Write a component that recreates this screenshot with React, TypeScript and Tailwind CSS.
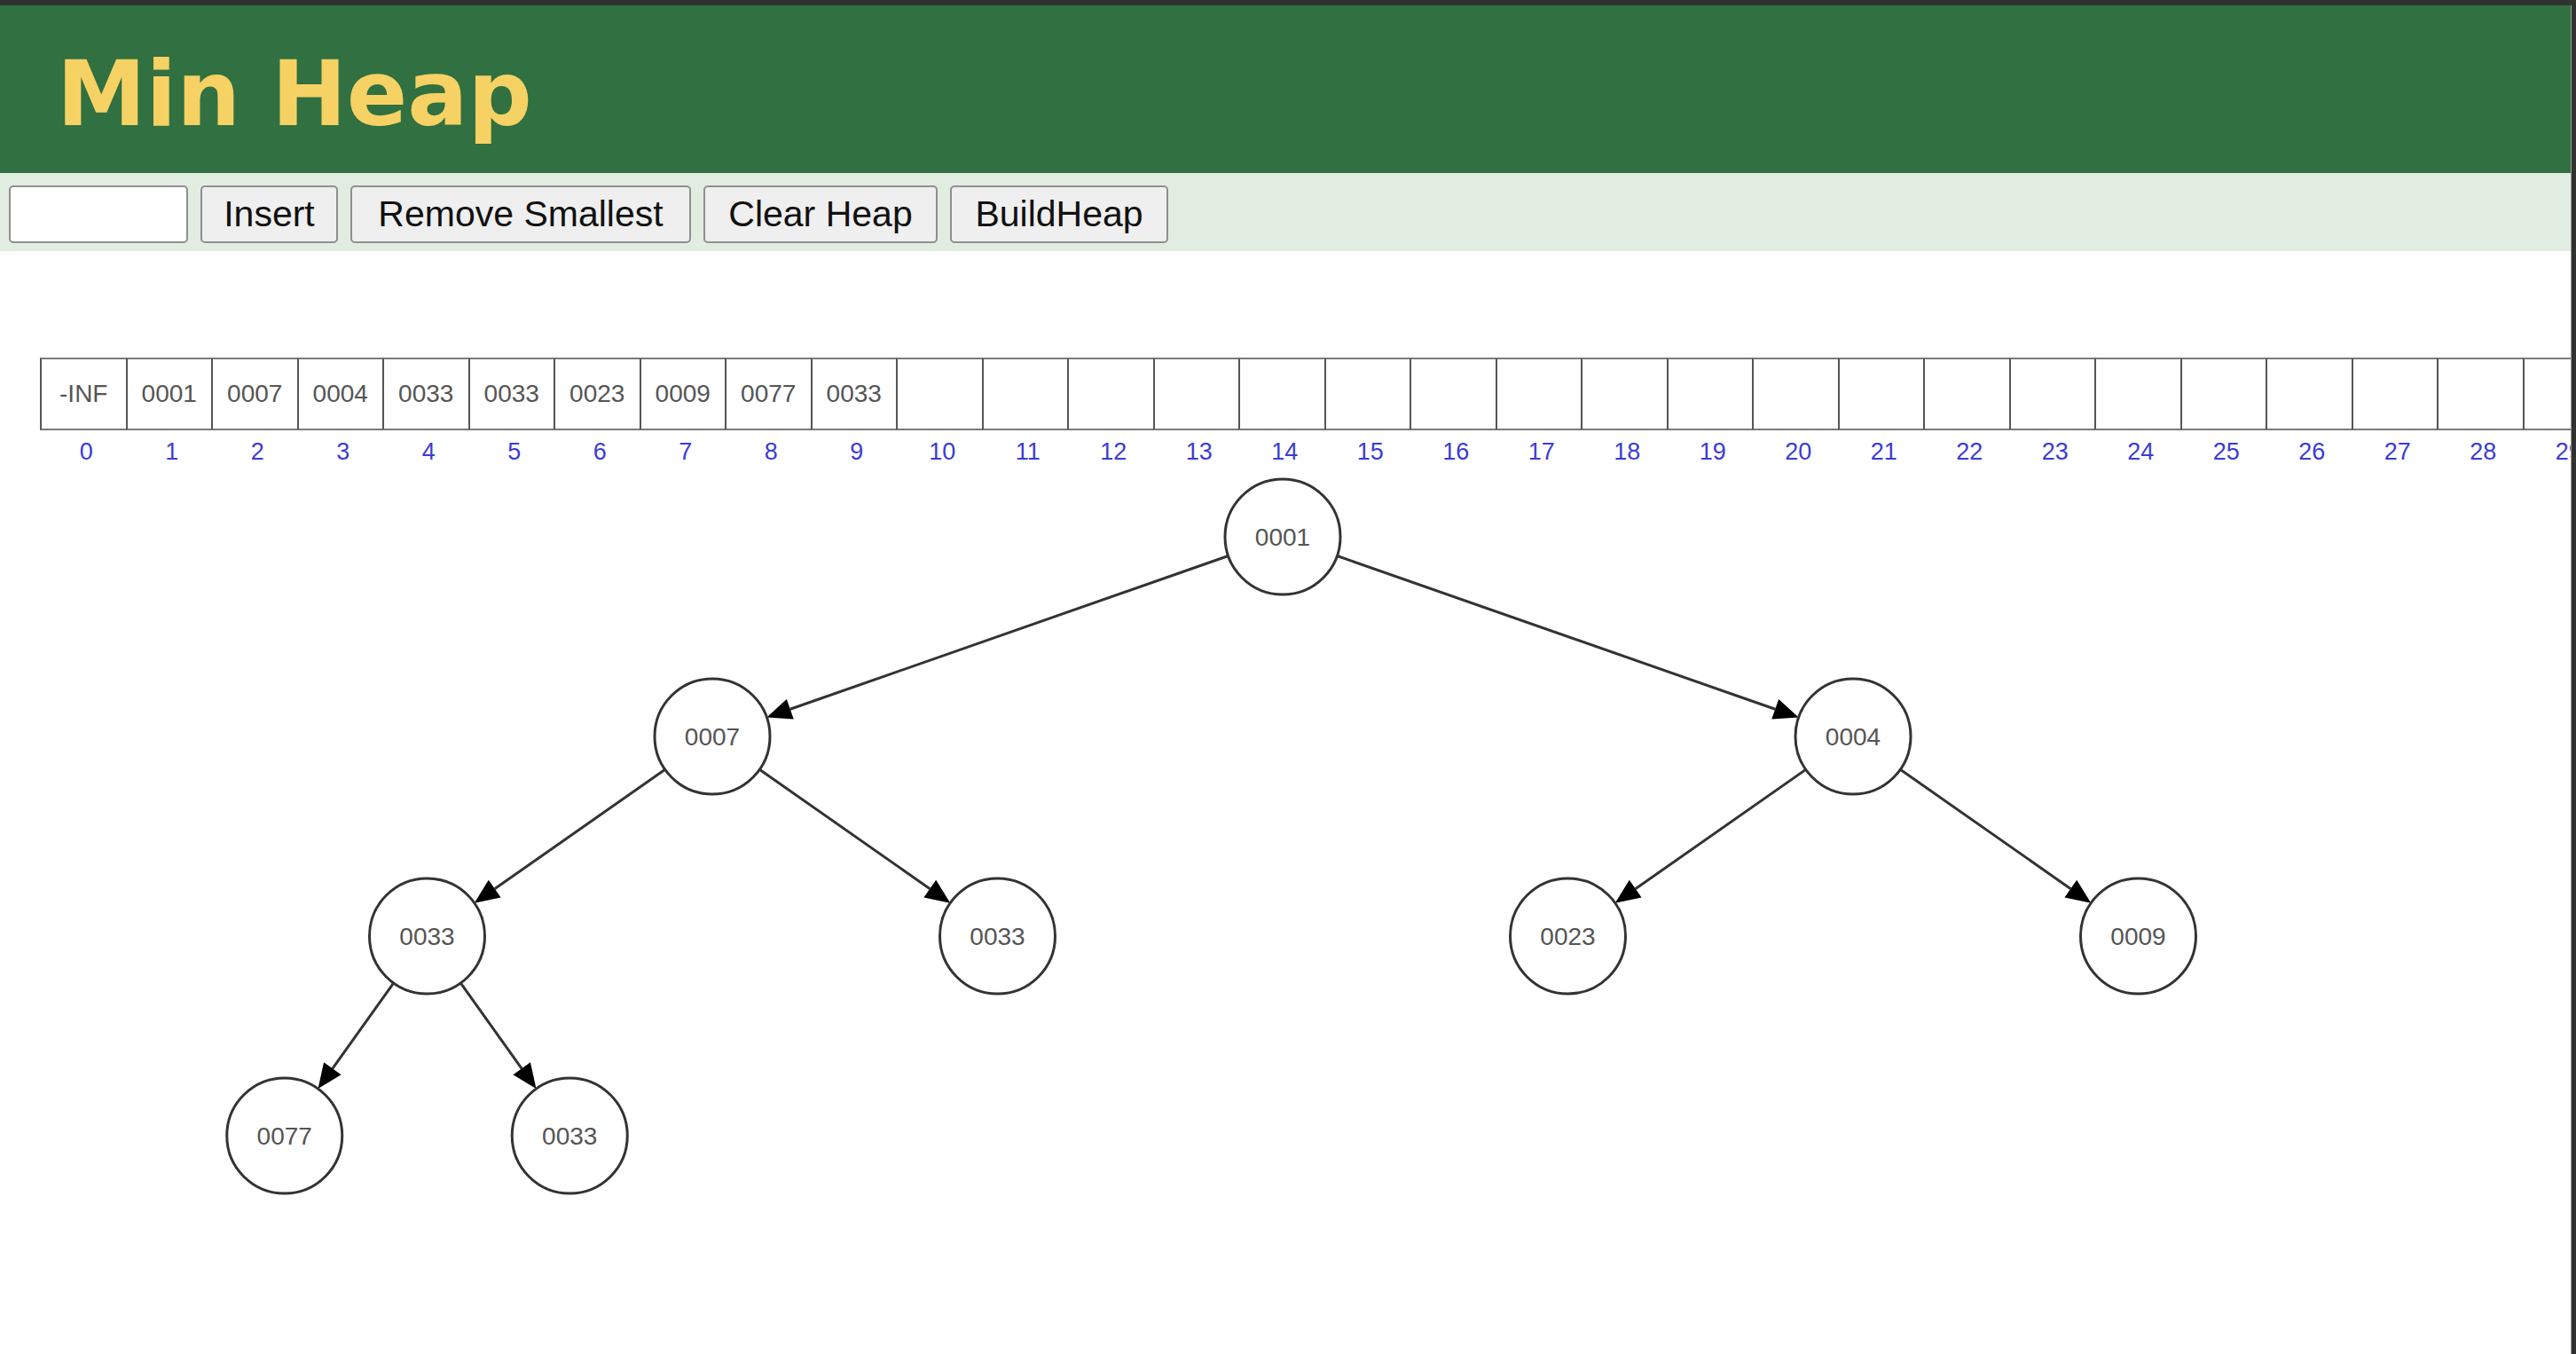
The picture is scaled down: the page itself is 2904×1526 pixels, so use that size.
import React from "react";

// 힙 배열 (0번은 sentinel)
const heap = ["-INF", "0001", "0007", "0004", "0033", "0033", "0023", "0009", "0077", "0033"];
const CELL_COUNT = 31;

const R = 65;
const ROOT_X = 1446;
const ROOT_Y = 72;
const LEVEL_GAP = 225;
const TREE_SPAN = 2572;

function nodePos(i: number) {
  const level = Math.floor(Math.log2(i));
  const count = Math.pow(2, level);
  const pos = i - count;
  const spacing = TREE_SPAN / count;
  return {
    x: ROOT_X + (pos - (count - 1) / 2) * spacing,
    y: ROOT_Y + level * LEVEL_GAP,
  };
}

function Edge({ from, to }: { from: number; to: number }) {
  const a = nodePos(from);
  const b = nodePos(to);
  const dx = b.x - a.x;
  const dy = b.y - a.y;
  const len = Math.sqrt(dx * dx + dy * dy);
  const ux = dx / len;
  const uy = dy / len;
  const sx = a.x + ux * R;
  const sy = a.y + uy * R;
  const ex = b.x - ux * R;
  const ey = b.y - uy * R;
  const head = 28;
  const half = 12;
  const bx = ex - ux * head;
  const by = ey - uy * head;
  const pts = `${ex},${ey} ${bx - uy * half},${by + ux * half} ${bx + uy * half},${by - ux * half}`;
  return (
    <g>
      <line x1={sx} y1={sy} x2={bx} y2={by} stroke="#333" strokeWidth={3} />
      <polygon points={pts} fill="#000" />
    </g>
  );
}

function HeapTree() {
  const idx = heap.map((_, i) => i).filter((i) => i >= 1);
  return (
    <svg width={2899} height={850} className="block">
      {idx
        .filter((i) => i >= 2)
        .map((i) => (
          <Edge key={`e${i}`} from={Math.floor(i / 2)} to={i} />
        ))}
      {idx.map((i) => {
        const p = nodePos(i);
        return (
          <g key={`n${i}`}>
            <circle cx={p.x} cy={p.y} r={R} fill="#fff" stroke="#333" strokeWidth={3} />
            <text
              x={p.x}
              y={p.y + 10}
              textAnchor="middle"
              fontSize={28}
              fill="#555"
              fontFamily="'Liberation Sans', Arial, sans-serif"
            >
              {heap[i]}
            </text>
          </g>
        );
      })}
    </svg>
  );
}

export default function App() {
  const buttons = [
    { label: "Insert", w: "w-[155px]" },
    { label: "Remove Smallest", w: "w-[384px]" },
    { label: "Clear Heap", w: "w-[264px]" },
    { label: "BuildHeap", w: "w-[246px]" },
  ];

  return (
    <div className="h-screen w-full bg-[#303230] pt-[6px] pr-[5px] overflow-hidden">
      <div className="h-full bg-white overflow-hidden border-r border-[#9a9a9a] font-['Liberation_Sans',Arial,sans-serif]">
        {/* 헤더 */}
        <div className="h-[189px] bg-[#317040] pl-[64px] pt-[50px]">
          <h1 className="text-[101px] leading-none font-bold text-[#f6d163] font-['DejaVu_Sans',Verdana,sans-serif]">
            Min Heap
          </h1>
        </div>

        {/* 툴바 */}
        <div className="h-[88px] bg-[#e2ede1] flex items-start gap-[14px] pl-[10px] pt-[14px]">
          <input
            type="text"
            className="w-[202px] h-[65px] bg-white border-2 border-[#8f8f8f] rounded-[5px] px-2 text-[36px] outline-none"
          />
          {buttons.map((b) => (
            <button
              key={b.label}
              className={`${b.w} h-[65px] bg-[#efefef] border-2 border-[#8f8f8f] rounded-[5px] text-[41px] text-[#111] leading-none flex items-center justify-center`}
            >
              {b.label}
            </button>
          ))}
        </div>

        {/* 배열 */}
        <div className="pt-[120px] pl-[45px]">
          <div className="flex">
            {Array.from({ length: CELL_COUNT }).map((_, i) => (
              <div
                key={i}
                className="shrink-0 w-[96.5px] h-[82px] border-y-2 border-l-2 border-y-[#7a7a7a] border-l-[#555] flex items-center justify-center text-[28px] text-[#555]"
              >
                {heap[i] ?? ""}
              </div>
            ))}
          </div>
          <div className="flex h-[48px] pl-[4px]">
            {Array.from({ length: CELL_COUNT }).map((_, i) => (
              <div
                key={i}
                className="shrink-0 w-[96.5px] flex items-center justify-center text-[27px] text-[#3b3bd6]"
              >
                {i}
              </div>
            ))}
          </div>
        </div>

        {/* 트리 */}
        <HeapTree />
      </div>
    </div>
  );
}
